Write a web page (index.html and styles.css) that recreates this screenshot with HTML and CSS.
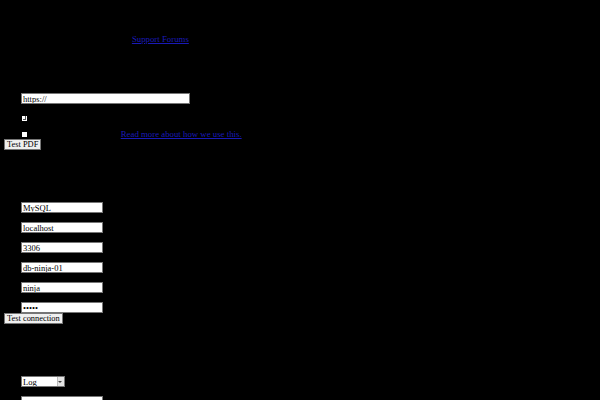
FILE: index.html
```html
<!DOCTYPE html>
<html lang="en">
<head>
    <meta charset="UTF-8">
    <meta name="viewport" content="width=device-width, initial-scale=1.0">
    <title>Invoice Ninja Setup</title>
    <link rel="stylesheet" href="styles.css">
</head>
<body>
    <form class="setup">
        <div class="intro">
            <p>If you need help you can post to our <a href="#">Support Forums</a></p>
        </div>

        <!-- Application settings -->
        <div class="section">
            <div class="field"><span class="label">URL</span><input class="input wide" type="text" value="https://"></div>
            <div class="field"><input class="check" type="checkbox" checked><span class="label">Require HTTPS</span></div>
            <div class="field short"><input class="check" type="checkbox"><span class="label">Send helpful error reports.</span> <a href="#">Read more about how we use this.</a></div>
            <button class="button" type="button">Test PDF</button>
        </div>

        <!-- Database connection -->
        <div class="section">
            <div class="field"><span class="label">Driver</span><input class="input" type="text" value="MySQL"></div>
            <div class="field"><span class="label">Host</span><input class="input" type="text" value="localhost"></div>
            <div class="field"><span class="label">Port</span><input class="input" type="text" value="3306"></div>
            <div class="field"><span class="label">Database</span><input class="input" type="text" value="db-ninja-01"></div>
            <div class="field"><span class="label">Username</span><input class="input" type="text" value="ninja"></div>
            <div class="field"><span class="label">Password</span><input class="input" type="password" value="ninja"></div>
            <button class="button" type="button">Test connection</button>
        </div>

        <!-- Mail settings -->
        <div class="section">
            <div class="field">
                <span class="label">Driver</span>
                <span class="select-wrap">
                    <select class="select">
                        <option>Log</option>
                        <option>SMTP</option>
                    </select>
                </span>
            </div>
            <div class="field"><span class="label">From name</span><input class="input" type="text"></div>
        </div>
    </form>
</body>
</html>
```

FILE: styles.css
```css
body {
    margin: 0;
    background-color: black;
    color: black;
    font-family: "Liberation Serif", serif;
    font-size: 8.5px;
}

.setup {
    padding: 0 4px;
}

.intro {
    height: 93px;
    padding-top: 34px;
    box-sizing: border-box;
}

.intro p {
    margin: 0;
    padding-left: 3px;
    line-height: 10px;
}

a {
    color: #1a1ab8;
    font-size: 8.8px;
}

.section {
    display: flex;
    flex-direction: column;
    align-items: flex-start;
    padding-bottom: 52px;
}

.field {
    display: flex;
    align-items: center;
    height: 11px;
    margin-top: 9px;
    padding-left: 17px;
    white-space: nowrap;
}

.field:first-child {
    margin-top: 0;
}

.field.short {
    height: 10px;
    margin-top: 5px;
}

/* labels are hidden in this theme: black on black */
.label {
    display: none;
}

.field.short .label {
    display: inline;
    margin-left: 2px;
    margin-right: 2px;
}

.input {
    width: 82px;
    height: 11px;
    box-sizing: border-box;
    margin: 0;
    padding: 0 1px;
    border: 1px solid #767676;
    background: white;
    color: black;
    font-family: "Liberation Serif", serif;
    font-size: 8.5px;
}

.input.wide {
    width: 169px;
}

.check {
    appearance: none;
    position: relative;
    width: 5px;
    height: 5px;
    margin: 0 0 0 1px;
    background: white;
    border: none;
}

.check:checked::after {
    content: "";
    position: absolute;
    left: 1px;
    top: 0;
    width: 2px;
    height: 3px;
    border-right: 1px solid #555;
    border-bottom: 1px solid #555;
}

.button {
    height: 11px;
    margin: 0;
    padding: 0 2px;
    border: 1px solid #767676;
    background-color: #efefef;
    color: black;
    font-family: "Liberation Serif", serif;
    font-size: 8.4px;
    line-height: 8px;
}

.select-wrap {
    position: relative;
    display: inline-block;
}

.select {
    appearance: none;
    display: block;
    width: 44px;
    height: 11px;
    margin: 0;
    padding: 0 1px;
    border: 1px solid #767676;
    border-radius: 0;
    background: white;
    color: black;
    font-family: "Liberation Serif", serif;
    font-size: 8.5px;
}

.select-wrap::after {
    content: "";
    position: absolute;
    right: 1px;
    top: 1px;
    width: 6px;
    height: 9px;
    background: #e4e4e4;
    border-left: 1px solid #bbb;
    pointer-events: none;
}

.select-wrap::before {
    content: "";
    position: absolute;
    right: 3px;
    top: 5px;
    border-left: 2px solid transparent;
    border-right: 2px solid transparent;
    border-top: 2px solid #444;
    z-index: 1;
    pointer-events: none;
}
```
